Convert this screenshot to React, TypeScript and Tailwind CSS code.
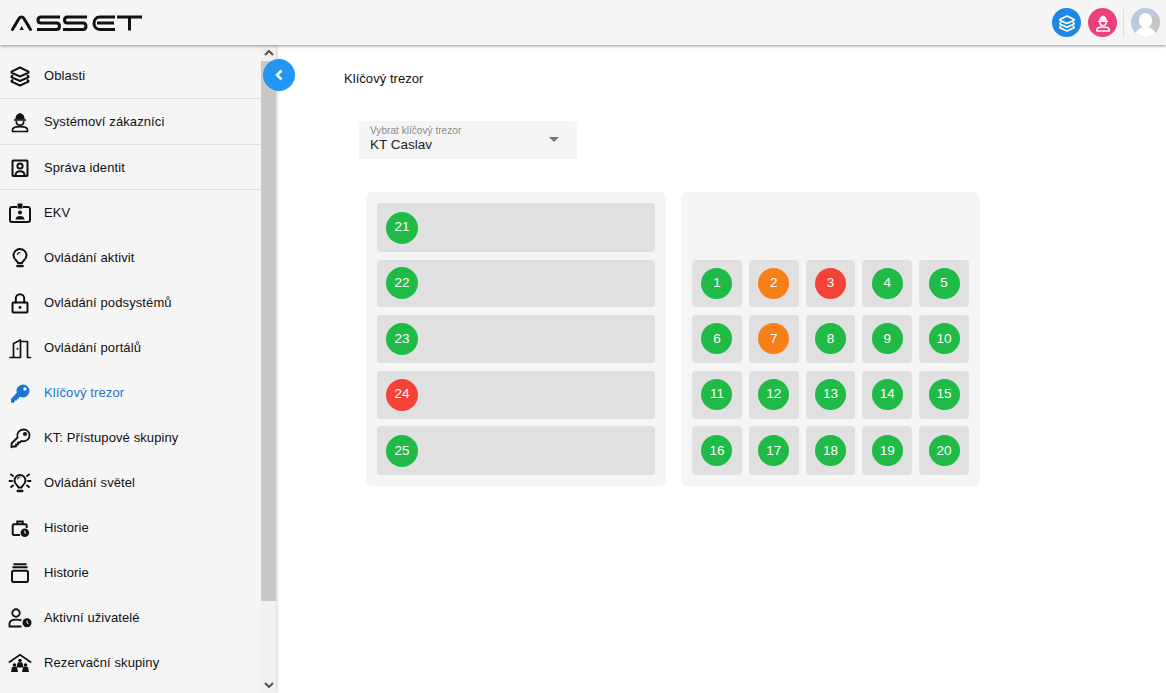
import React from "react";

const S = ({ children, size = 24 }: { children: React.ReactNode; size?: number }) => (
  <svg width={size} height={size} viewBox="0 0 24 24" fill="none" stroke="currentColor" strokeWidth="2" strokeLinecap="round" strokeLinejoin="round">
    {children}
  </svg>
);

const LayersIcon = ({ size = 24 }: { size?: number }) => (
  <S size={size}>
    <path d="M12 3.500l8.500 4.200v1L12 12.500 3.500 8.700v-1z" />
    <path d="M4.500 11.500L3.500 12.500v.7L12 17l8.500-3.800v-.7l-1-1" />
    <path d="M4.500 16L3.500 17v.7L12 21.500l8.500-3.800V17l-1-1" />
  </S>
);
const WorkerIcon = ({ size = 24 }: { size?: number }) => (
  <svg width={size} height={size} viewBox="0 0 24 24" fill="none" stroke="currentColor" strokeLinecap="round" strokeLinejoin="round">
    <path d="M8 9C8 6 9.700 3.800 12 3.800S16 6 16 9z" fill="currentColor" strokeWidth="1.200" />
    <path d="M6.500 10h11" strokeWidth="1.600" />
    <path d="M8.300 11.500c0 2.300 1.600 3.700 3.700 3.700s3.700-1.400 3.700-3.700" strokeWidth="1.700" />
    <path d="M4.500 21.500v-1.500c0-2.200 3-3.300 7.500-3.300s7.500 1.100 7.500 3.300v1.500z" strokeWidth="1.700" />
  </svg>
);
const IdentityIcon = () => (
  <S>
    <rect x="4.500" y="4.500" width="15" height="15.500" rx="0.800" />
    <circle cx="12" cy="10" r="2.600" />
    <path d="M7.500 19.500c0-2.900 2-4.300 4.500-4.300s4.500 1.400 4.500 4.300" />
  </S>
);
const BadgeIcon = () => (
  <svg width="24" height="24" viewBox="0 0 24 24">
    <path d="M9 6H4c-1.100 0-2 .9-2 2v11c0 1.100.9 2 2 2h16c1.100 0 2-.9 2-2V8c0-1.100-.9-2-2-2h-5" fill="none" stroke="currentColor" strokeWidth="2" />
    <rect x="9.500" y="2.500" width="5" height="5" rx=".6" fill="currentColor" />
    <circle cx="12" cy="11.500" r="2" fill="currentColor" />
    <path d="M7.500 18.500c0-2.400 2-3.500 4.500-3.500s4.500 1.100 4.500 3.500z" fill="currentColor" />
  </svg>
);
const BulbIcon = () => (
  <S>
    <path d="M10 17c-.3-2.300-4.500-3.500-4.500-7.500a6.500 6.500 0 0 1 13 0c0 4-4.200 5.200-4.500 7.500z" />
    <path d="M9.500 20h5" strokeWidth="2.600" />
    <path d="M12 6.500c-1.300 0-2.300.8-2.600 2" strokeWidth="1.200" />
  </S>
);
const LockIcon = () => (
  <S>
    <rect x="4.500" y="11.500" width="15" height="10" rx="1" />
    <path d="M7.800 11.500V7.500a4.200 4.200 0 0 1 8.400 0v4" />
    <circle cx="12" cy="16.500" r="1.400" fill="currentColor" stroke="none" />
  </S>
);
const DoorIcon = () => (
  <svg width="24" height="24" viewBox="0 0 24 24" fill="none" stroke="currentColor" strokeWidth="1.700" strokeLinejoin="round" strokeLinecap="round">
    <path d="M2 21.500h10.500V4L5.500 7.500v14" />
    <path d="M12.500 5.500h7v16h3" />
    <circle cx="9.500" cy="12.800" r="1" fill="currentColor" stroke="none" />
  </svg>
);
const KeyFilled = () => (
  <svg width="24" height="24" viewBox="0 0 24 24">
    <circle cx="15" cy="10" r="6.500" fill="currentColor" />
    <path d="M9.500 11l4 4.500L11 16v1.800H9v1.800H7L6 21.800H3V18z" fill="currentColor" />
    <circle cx="17" cy="8" r="1.700" fill="#f5f5f5" />
  </svg>
);
const KeyOutline = () => (
  <svg width="24" height="24" viewBox="0 0 24 24" fill="none" stroke="currentColor" strokeWidth="1.800" strokeLinejoin="round" strokeLinecap="round">
    <path d="M3.500 17.500L9.500 11.500C8.500 6.800 11.500 3.500 15.500 3.500c3.500 0 6 2.500 6 6 0 4-4 6.500-8 5.500L12 16.500h-2v2H8v2H5l-1.500.8z" />
    <circle cx="17" cy="8" r="1.200" />
  </svg>
);
const BulbRaysIcon = () => (
  <S>
    <path d="M10.500 16.500c-.3-2-4-3-4-7a5.500 5.500 0 0 1 11 0c0 4-3.700 5-4 7z" />
    <path d="M9.800 20h4.400" strokeWidth="2.600" />
    <path d="M3 3.500l2 1.500M1.500 10H4M3 16l2-1.500M21 3.500L19 5M22.500 10H20M21 16l-2-1.500" />
    <path d="M12 6c-1.200 0-2.100.7-2.400 1.800" strokeWidth="1.200" />
  </S>
);
const BriefcaseClock = () => (
  <svg width="24" height="24" viewBox="0 0 24 24">
    <path d="M12 19H6c-.8 0-1.300-.5-1.300-1.300V9.500c0-.8.5-1.300 1.300-1.300h11.500c.8 0 1.200.5 1.200 1.300V12M9.300 8V5.500h5.400V8" fill="none" stroke="currentColor" strokeWidth="2" />
    <circle cx="16.800" cy="16.700" r="4.300" fill="currentColor" />
    <path d="M16.800 14.500v2.400l1.400.8" stroke="#f5f5f5" strokeWidth="1" fill="none" />
  </svg>
);
const StackIcon = () => (
  <svg width="24" height="24" viewBox="0 0 24 24" fill="none" stroke="currentColor">
    <path d="M5.500 3.300h13M4.500 6.300h15" strokeWidth="2" />
    <rect x="4" y="9.800" width="16" height="11.200" rx="1.800" strokeWidth="2" />
  </svg>
);
const UserClock = () => (
  <svg width="24" height="24" viewBox="0 0 24 24">
    <circle cx="8" cy="7" r="3.700" fill="none" stroke="currentColor" strokeWidth="1.900" />
    <path d="M13.500 14.400c-1.500-.5-3.300-.8-5-.8-3.700 0-7 1.300-7 4v2.900h12" fill="none" stroke="currentColor" strokeWidth="1.900" />
    <circle cx="19" cy="16.800" r="4.500" fill="currentColor" />
    <path d="M19 14.500v2.500l1.500.8" stroke="#f5f5f5" strokeWidth="1" fill="none" />
  </svg>
);
const Person = ({ x, y }: { x: number; y: number }) => (
  <g transform={`translate(${x} ${y})`} fill="currentColor">
    <circle cx="0" cy="0" r="1.800" />
    <path d="M-3.500 7l1-4.500c.3-.5.8-.7 1.200-.7h2.600c.4 0 .9.200 1.200.7l1 4.500z" />
  </g>
);
const GroupHome = () => (
  <svg width="24" height="24" viewBox="0 0 24 24">
    <path d="M.8 11.500L12 3.800l11.200 7.700" fill="none" stroke="currentColor" strokeWidth="1.700" />
    <Person x={12} y={9.500} />
    <Person x={6.500} y={14} />
    <Person x={17.500} y={14} />
  </svg>
);

const NAV: { label: string; icon: React.ReactNode; active?: boolean; line?: boolean; h: string }[] = [
  { label: "Oblasti", icon: <LayersIcon />, line: true, h: "h-[46px]" },
  { label: "Systémoví zákazníci", icon: <WorkerIcon />, line: true, h: "h-[46px]" },
  { label: "Správa identit", icon: <IdentityIcon />, line: true, h: "h-[45px] pt-[1px]" },
  { label: "EKV", icon: <BadgeIcon />, h: "h-[45px] pt-[1px]" },
  { label: "Ovládání aktivit", icon: <BulbIcon />, h: "h-[45px]" },
  { label: "Ovládání podsystémů", icon: <LockIcon />, h: "h-[45px]" },
  { label: "Ovládání portálů", icon: <DoorIcon />, h: "h-[45px]" },
  { label: "Klíčový trezor", icon: <KeyFilled />, active: true, h: "h-[45px]" },
  { label: "KT: Přístupové skupiny", icon: <KeyOutline />, h: "h-[45px]" },
  { label: "Ovládání světel", icon: <BulbRaysIcon />, h: "h-[45px]" },
  { label: "Historie", icon: <BriefcaseClock />, h: "h-[45px]" },
  { label: "Historie", icon: <StackIcon />, h: "h-[45px]" },
  { label: "Aktivní uživatelé", icon: <UserClock />, h: "h-[45px]" },
  { label: "Rezervační skupiny", icon: <GroupHome />, h: "h-[45px]" },
];

const Logo = () => (
  <svg width="134" height="18" viewBox="0 0 134 18" fill="none" stroke="#111" strokeWidth="3" strokeLinejoin="round" role="img" aria-label="ASSET">
    <path d="M3.500 15.500L10 4.500C11.300 2.500 13.700 2.500 15 4.500L21.500 15.500" strokeLinecap="round" />
    <path d="M12.700 12l2.100 4h-4.200z" fill="#111" stroke="none" />
    <path d="M51 3H32c-4 0-4 6 0 6h15.500c4 0 4 6.500 0 6.500H28" />
    <path d="M78 3H58.500c-4 0-4 6 0 6H74c4 0 4 6.500 0 6.500H54" />
    <path d="M106 3H91c-8 0-8 12.500 0 12.500h15M88 9h17" />
    <path d="M108 3h25M120.500 3v13.500" />
  </svg>
);

const Dot = ({ n, color, size }: { n: number; color: string; size: string }) => (
  <div className={`flex items-center justify-center rounded-full text-[13.5px] text-white ${size} ${color}`}>{n}</div>
);

const G = "bg-[#20ba46]";
const O = "bg-[#f67f17]";
const R = "bg-[#f44336]";
const LEFT: [number, string][] = [[21, G], [22, G], [23, G], [24, R], [25, G]];
const RIGHT: string[] = [G, O, R, G, G, G, O, G, G, G, G, G, G, G, G, G, G, G, G, G];

export default function App() {
  return (
    <div className="flex h-screen w-full flex-col overflow-hidden bg-white font-['Liberation_Sans',Arial,sans-serif] text-[14px] text-[#111]">
      <header className="relative z-20 flex h-[45px] shrink-0 items-center bg-[#f5f5f5] pl-[9px] pr-[6px] shadow-[0_1px_3px_rgba(0,0,0,0.4)]">
        <Logo />
        <div className="ml-auto flex items-center">
          <div className="flex h-[29px] w-[29px] items-center justify-center rounded-full bg-[#1e88e5] text-white">
            <LayersIcon size={20} />
          </div>
          <div className="ml-[7px] flex h-[29px] w-[29px] items-center justify-center rounded-full bg-[#ec407a] text-white">
            <WorkerIcon size={20} />
          </div>
          <div className="ml-[6px] mr-[7px] h-[28px] w-px bg-[#dedede]" />
          <div className="relative h-[29px] w-[29px] overflow-hidden rounded-full bg-[linear-gradient(135deg,#b8c9e0_58%,#c6c6c6_58%)]">
            <div className="absolute left-[8px] top-[5px] h-[15px] w-[13px] rounded-full bg-white" />
            <div className="absolute left-[3px] top-[19px] h-[14px] w-[23px] rounded-t-full bg-white" />
          </div>
        </div>
      </header>
      <div className="relative flex min-h-0 flex-1">
        <aside className="flex w-[276px] shrink-0 overflow-hidden bg-[#f5f5f5] shadow-[1px_0_3px_rgba(0,0,0,0.2)]">
          <nav className="min-w-0 flex-1 pt-[8px]">
            {NAV.map((it, i) => (
              <div
                key={i}
                className={`flex items-center pl-[8px] ${it.h} ${it.line ? "border-b border-[#dcdcdc]" : ""} ${it.active ? "text-[#1976d2]" : "text-[#111]"}`}
              >
                <span className="flex w-[24px] shrink-0 justify-center">{it.icon}</span>
                <span className="ml-[12px] whitespace-nowrap text-[13px] tracking-[0.1px]">{it.label}</span>
              </div>
            ))}
          </nav>
          <div className="flex w-[15px] shrink-0 flex-col bg-[#f1f1f1]">
            <div className="flex h-[16px] items-center justify-center">
              <svg width="10" height="6" viewBox="0 0 10 6" fill="none" stroke="#505050" strokeWidth="2"><path d="M1 5l4-4 4 4" /></svg>
            </div>
            <div className="h-[540px] bg-[#c8c8c8]" />
            <div className="mt-auto flex h-[16px] items-center justify-center">
              <svg width="10" height="6" viewBox="0 0 10 6" fill="none" stroke="#505050" strokeWidth="2"><path d="M1 1l4 4 4-4" /></svg>
            </div>
          </div>
        </aside>
        <button className="absolute left-[263px] top-[14px] z-10 flex h-[32px] w-[32px] items-center justify-center rounded-full bg-[#2196f3] text-white">
          <svg width="12" height="14" viewBox="0 0 12 14" fill="none" stroke="white" strokeWidth="2.500"><path d="M8.500 2.500L4 7l4.500 4.500" /></svg>
        </button>
        <main className="min-w-0 flex-1 pl-[68px] pt-[25px]">
          <div className="text-[13px] leading-[18px] tracking-[0.05px]">Klíčový trezor</div>
          <div className="relative ml-[15px] mt-[33px] h-[38px] w-[218px] rounded-t-[3px] bg-[#f5f5f5] pl-[11px] pt-[4px]">
            <div className="text-[10px] leading-[12px] tracking-[0.05px] text-[#8a8a8a]">Vybrat klíčový trezor</div>
            <div className="text-[13.5px] leading-[16px] text-[#222]">KT Caslav</div>
            <div className="absolute right-[18px] top-[16px] h-0 w-0 border-x-[5px] border-t-[5px] border-x-transparent border-t-[#757575]" />
          </div>
          <div className="ml-[22px] mt-[33px] flex gap-[15px]">
            <div className="grid h-[294px] w-[300px] grid-rows-[49px_47px_48.2px_48px_49px] gap-[7.8px] rounded-[6px] bg-[#f5f5f5] p-[11px]">
              {LEFT.map(([n, c]) => (
                <div key={n} className="flex items-center rounded-[4px] bg-[#e0e0e0] pl-[9px]">
                  <Dot n={n} color={c} size="h-[32px] w-[32px]" />
                </div>
              ))}
            </div>
            <div className="grid h-[294px] w-[299px] grid-cols-5 grid-rows-[49px_47px_48.2px_48px_49px] gap-x-[7px] gap-y-[7.8px] rounded-[6px] bg-[#f5f5f5] p-[11px]">
              <div className="col-span-5" />
              {RIGHT.map((c, i) => (
                <div key={i} className="flex items-center justify-center rounded-[4px] bg-[#e0e0e0]">
                  <Dot n={i + 1} color={c} size="h-[31px] w-[31px]" />
                </div>
              ))}
            </div>
          </div>
        </main>
      </div>
    </div>
  );
}
